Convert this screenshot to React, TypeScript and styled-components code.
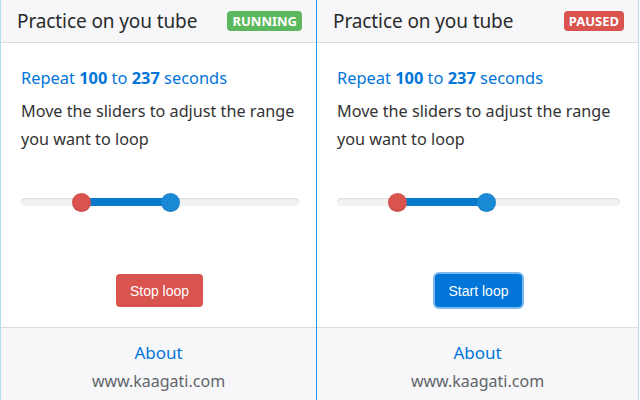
import styled, { createGlobalStyle } from "styled-components";

const GlobalStyle = createGlobalStyle`
  html, body {
    margin: 0;
    padding: 0;
    background: #ffffff;
  }
  body {
    font-family: "Noto Sans", "Open Sans", sans-serif;
  }
`;

const Screen = styled.div`
  display: flex;
  width: 640px;
  height: 400px;
  overflow: hidden;
`;

const Panel = styled.div<{ $width: number; $left?: string; $right: string }>`
  width: ${(p) => p.$width}px;
  height: 400px;
  box-sizing: border-box;
  display: flex;
  flex-direction: column;
  border-left: ${(p) => (p.$left ? `1px solid ${p.$left}` : "none")};
  border-right: 1px solid ${(p) => p.$right};
  background: #fff;
`;

const Header = styled.div`
  height: 42px;
  flex: none;
  display: flex;
  align-items: center;
  justify-content: space-between;
  padding: 0 14px 0 16px;
  background: #f7f7f9;
  border-bottom: 1px solid #dcdcde;
`;

const Title = styled.h1`
  margin: 0;
  font-size: 19px;
  font-weight: 400;
  color: #292b2c;
  letter-spacing: -0.1px;
`;

const Badge = styled.span<{ $color: string }>`
  display: inline-block;
  padding: 2px 5px 2px;
  border-radius: 4px;
  background: ${(p) => p.$color};
  color: #fff;
  font-size: 13px;
  font-weight: 700;
  line-height: 16px;
  letter-spacing: 0;
`;

const Body = styled.div`
  flex: none;
  height: 284px;
  box-sizing: border-box;
  padding: 23px 18px 0 20px;
  display: flex;
  flex-direction: column;
`;

const Repeat = styled.div`
  font-size: 16.4px;
  line-height: 24px;
  color: #0275d8;

  b {
    font-weight: 700;
  }
`;

const Hint = styled.p`
  margin: 7px 0 0;
  font-size: 16.2px;
  line-height: 28px;
  color: #333;
`;

const SliderArea = styled.div`
  margin-top: 39px;
  height: 20px;
  position: relative;
  display: flex;
  align-items: center;
`;

const Track = styled.div`
  width: 100%;
  height: 8px;
  border-radius: 4px;
  background: #f2f2f2;
  box-shadow: inset 0 1px 2px rgba(0, 0, 0, 0.1);
  position: relative;
`;

const Selection = styled.div`
  position: absolute;
  top: 0;
  height: 8px;
  background: #0a7bcc;
`;

const Handle = styled.div<{ $color: string }>`
  position: absolute;
  top: 50%;
  width: 19px;
  height: 19px;
  margin: -9.5px 0 0 -9.5px;
  border-radius: 50%;
  background: ${(p) => p.$color};
  box-shadow: inset 0 -1px 2px rgba(0, 0, 0, 0.12);
`;

const ButtonRow = styled.div`
  margin-top: 62px;
  display: flex;
  justify-content: center;
`;

const LoopButton = styled.button<{ $color: string; $focus?: boolean }>`
  height: 33px;
  padding: 0 14px;
  border: none;
  border-radius: 4px;
  background: ${(p) => p.$color};
  color: #fff;
  font-family: "Liberation Sans", Arial, sans-serif;
  font-size: 14px;
  box-shadow: ${(p) => (p.$focus ? "0 0 0 2px #7fb8ec" : "none")};
`;

const Footer = styled.div`
  flex: 1;
  background: #f7f7f9;
  border-top: 1px solid #dcdcde;
  display: flex;
  flex-direction: column;
  align-items: center;
  padding-top: 12px;
`;

const About = styled.a`
  font-size: 17px;
  line-height: 26px;
  color: #0275d8;
  text-decoration: none;
`;

const Site = styled.div`
  margin-top: 2px;
  font-size: 16px;
  line-height: 26px;
  color: #5f6569;
`;

type PopupProps = {
  width: number;
  left?: string;
  right: string;
  running: boolean;
  trackWidth: number;
};

function Popup({ width, left, right, running, trackWidth }: PopupProps) {
  // handle positions on the track, in px
  const from = 60;
  const to = 149;
  return (
    <Panel $width={width} $left={left} $right={right}>
      <Header>
        <Title>Practice on you tube</Title>
        {running ? (
          <Badge $color="#5cb85c">RUNNING</Badge>
        ) : (
          <Badge $color="#d9534f">PAUSED</Badge>
        )}
      </Header>
      <Body>
        <Repeat>
          Repeat <b>100</b> to <b>237</b> seconds
        </Repeat>
        <Hint>
          Move the sliders to adjust the range
          <br />
          you want to loop
        </Hint>
        <SliderArea style={{ width: trackWidth }}>
          <Track>
            <Selection style={{ left: from, width: to - from }} />
            <Handle $color="#d9534f" style={{ left: from }} />
            <Handle $color="#1a8ad6" style={{ left: to }} />
          </Track>
        </SliderArea>
        <ButtonRow>
          {running ? (
            <LoopButton $color="#d9534f">Stop loop</LoopButton>
          ) : (
            <LoopButton $color="#0275d8" $focus>
              Start loop
            </LoopButton>
          )}
        </ButtonRow>
      </Body>
      <Footer>
        <About href="#">About</About>
        <Site>www.kaagati.com</Site>
      </Footer>
    </Panel>
  );
}

export default function App() {
  return (
    <>
      <GlobalStyle />
      <Screen>
        <Popup width={317} left="#b3dcf5" right="#2596e6" running trackWidth={278} />
        <Popup width={322} right="#b3dcf5" running={false} trackWidth={283} />
      </Screen>
    </>
  );
}
